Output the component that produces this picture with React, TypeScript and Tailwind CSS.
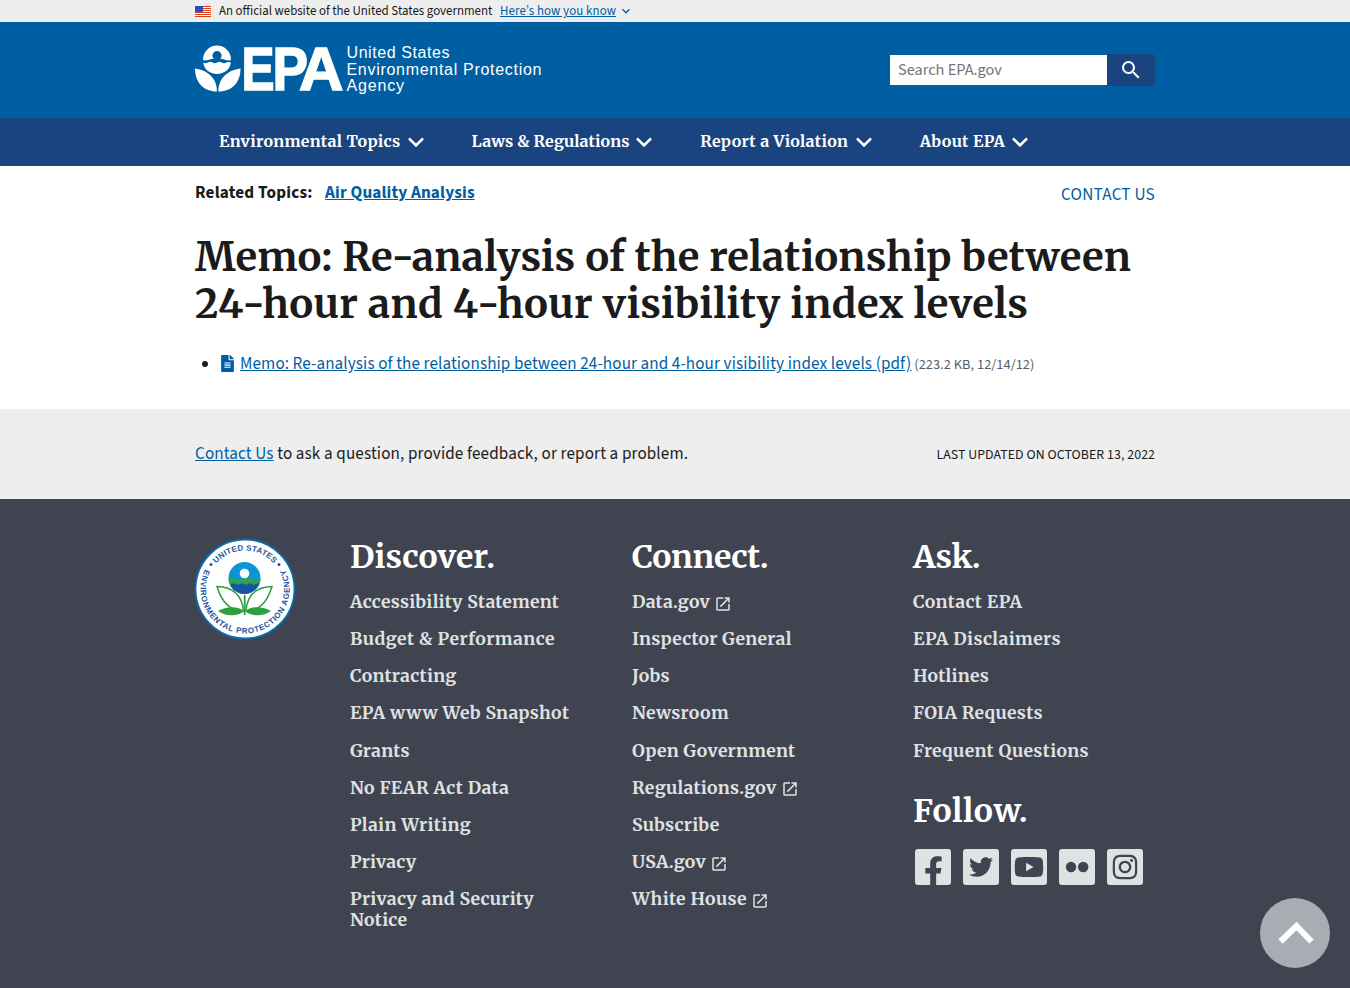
import React from "react";
import { MdExpandMore, MdOpenInNew, MdSearch } from "react-icons/md";
import { FaFacebookF, FaFileAlt, FaInstagram, FaTwitter, FaYoutube } from "react-icons/fa";

type Item = { label: string; external?: boolean; tracking?: string };

const navItems: Item[] = [
  { label: "Environmental Topics", tracking: "w-[181px] tracking-[0.3px]" },
  { label: "Laws & Regulations", tracking: "w-[157px] tracking-[0.1px]" },
  { label: "Report a Violation", tracking: "w-[148px] tracking-[0.31px]" },
  { label: "About EPA", tracking: "w-[85px] tracking-[0.3px]" },
];

const discover: Item[] = [
  { label: "Accessibility Statement" },
  { label: "Budget & Performance", tracking: "tracking-[0.46px]" },
  { label: "Contracting" },
  { label: "EPA www Web Snapshot", tracking: "tracking-[0.35px]" },
  { label: "Grants" },
  { label: "No FEAR Act Data", tracking: "tracking-[0.36px]" },
  { label: "Plain Writing", tracking: "tracking-[0.37px]" },
  { label: "Privacy", tracking: "tracking-[0.15px]" },
  { label: "Privacy and Security Notice" },
];

const connect: Item[] = [
  { label: "Data.gov", external: true },
  { label: "Inspector General" },
  { label: "Jobs" },
  { label: "Newsroom", tracking: "tracking-[0.33px]" },
  { label: "Open Government" },
  { label: "Regulations.gov", external: true },
  { label: "Subscribe" },
  { label: "USA.gov", external: true },
  { label: "White House", external: true, tracking: "tracking-[0.39px]" },
];

const ask: Item[] = [
  { label: "Contact EPA", tracking: "tracking-[0.36px]" },
  { label: "EPA Disclaimers", tracking: "tracking-[0.42px]" },
  { label: "Hotlines" },
  { label: "FOIA Requests", tracking: "tracking-[0.3px]" },
  { label: "Frequent Questions", tracking: "tracking-[0.33px]" },
];

const Flag = () => (
  <svg width="16" height="11" viewBox="0 0 16 11" className="shrink-0">
    <rect width="16" height="11" fill="#fff" />
    {[0, 2, 4, 6, 8, 10].map((y) => (
      <rect key={y} y={y} width="16" height="1" fill="#db3e1f" />
    ))}
    <rect width="8" height="6" fill="#1e33b1" />
    {[1, 3, 5].map((y) =>
      [1, 3, 5, 7].map((x) => <circle key={`${x}-${y}`} cx={x} cy={y} r="0.4" fill="#fff" />),
    )}
  </svg>
);

const Logo = () => (
  <svg width="350" height="54" viewBox="0 0 350 54" fill="#fff" className="block overflow-visible" fontFamily="Liberation Sans, sans-serif">
    <path d="M8 15.6 A14 14 0 0 1 36 15.6 L35 16.4 Q31 16.6 27.5 15 L25.2 15 A4.6 4.6 0 1 0 18.8 15 L16.5 15 Q12.5 16.6 9 16.4 Z" />
    <path d="M8.3 18.6 q2.3 1.5 4.6 0 q2.3 -1.5 4.6 0 q2.3 1.5 4.6 0 q2.3 -1.5 4.6 0 q2.3 1.5 4.6 0 q2.2 -1 4.5 0 C35 25.5 29.5 30 22 30 S9 25.5 8.3 18.6 Z" />
    <path d="M0 24.5 C0 38 8 47.5 21.800 47.5 C22.5 36 13.5 26 0 24.5 Z" />
    <path d="M45.5 24.5 C45.5 38 37.5 47.5 23.400 47.5 C23 36 31.5 26 45.5 24.5 Z" />
    <g fontWeight="700" fontSize="61.5" stroke="#fff" strokeWidth="1.6">
      <text x="46.5" y="45.5" textLength="33" lengthAdjust="spacingAndGlyphs">E</text>
      <text x="77.5" y="45.5" textLength="35.500" lengthAdjust="spacingAndGlyphs">P</text>
      <text x="104" y="45.5">A</text>
    </g>
    <g fontSize="16">
      <text x="151.5" y="14" textLength="103">United States</text>
      <text x="151.5" y="30.5" textLength="195">Environmental Protection</text>
      <text x="151.5" y="47.3" textLength="57.5">Agency</text>
    </g>
  </svg>
);

const Seal = () => (
  <svg width="102" height="102" viewBox="0 0 102 102" className="-ml-px block" fontFamily="Liberation Sans, sans-serif">
    <defs>
      <path id="arcTop" d="M12.5 51 A38.5 38.5 0 0 1 89.5 51" />
      <path id="arcFull" d="M19.5 19.5 A44.5 44.5 0 1 0 82.5 19.5" />
      <clipPath id="globe"><circle cx="50.5" cy="40" r="16" /></clipPath>
    </defs>
    <circle cx="51" cy="51" r="49.5" fill="#fff" stroke="#0a6bb0" strokeWidth="1.8" />
    <g fill="#17569b" fontWeight="700" fontSize="8">
      <text><textPath href="#arcTop" startOffset="50%" textAnchor="middle" textLength="65">UNITED STATES</textPath></text>
      <text><textPath href="#arcFull" startOffset="50%" textAnchor="middle" textLength="180">ENVIRONMENTAL PROTECTION AGENCY</textPath></text>
    </g>
    <circle cx="17" cy="26.5" r="1.5" fill="#17569b" />
    <circle cx="85" cy="26.5" r="1.5" fill="#17569b" />
    <g clipPath="url(#globe)">
      <rect x="34" y="24" width="34" height="34" fill="#0c95d4" />
      <path d="M34 40.5 q4 -1 8 .5 t8 -.5 t8 .5 t9 -.5 V48 H34 Z" fill="#2fa34a" />
      <path d="M34 46 q2 1.500 4 0 t4 0 t4 0 t4 0 t4 0 t4 0 t4 0 t5 0 V60 H34 Z" fill="#1553a5" />
    </g>
    <circle cx="50.5" cy="35.5" r="4.8" fill="#fff" />
    <path d="M49.800 57 h1.800 v20 h-1.800 Z" fill="#2d9f3f" />
    <g fill="#fff" stroke="#2d9f3f" strokeWidth="1.5">
      <path d="M49.5 73 C35 73 27 62 23 48.5 C39 49 48 57 49.5 73 Z" />
      <path d="M52 73 C66 73 74 62 78 48.5 C62 49 53 57 52 73 Z" />
    </g>
    <path d="M50 73.5 C44 67 31 69 24 73 C31 78.5 44 78.5 50 73.5 Z M51.5 73.5 C57 67 70 69 77 73 C70 78.5 57 78.5 51.5 73.5 Z" fill="#2d9f3f" />
  </svg>
);

const FooterList = ({ items }: { items: Item[] }) => (
  <ul className="mt-[15.100px] flex flex-col gap-[16.120px] text-[17.600px] leading-[21px] text-[#dfe1e2]">
    {items.map(({ label, external, tracking }) => (
      <li key={label} className={`flex items-center ${tracking ?? "tracking-[0.27px]"}`}>
        <span>{label}</span>
        {external && <MdOpenInNew className="mt-[2.500px] ml-1 size-[18px] shrink-0" />}
      </li>
    ))}
  </ul>
);

const Tile = ({ children }: { children: React.ReactNode }) => (
  <a className="relative flex size-9 items-center justify-center overflow-hidden rounded-[3px] bg-[#dfe1e2] text-[#3f4450]">
    {children}
  </a>
);

const serif = "font-['Merriweather','DejaVu_Serif_Condensed','DejaVu_Serif',serif] font-bold";
const heading = "text-[32px] leading-[40px] text-white";

export default function App() {
  return (
    <div className="relative h-[988px] overflow-hidden bg-white font-['Source_Sans_3','Noto_Sans_CJK_SC',sans-serif] text-[#1b1b1b]">
      <div className="h-[22px] bg-[#eeeeee]">
        <div className="mx-auto flex h-[22px] w-[960px] items-center text-[12.880px] leading-[22px] whitespace-nowrap">
          <Flag />
          <span className="ml-2 w-[273px]">An official website of the United States government</span>
          <a className="ml-2 w-[116px] tracking-[0.110px] text-[#005ea2] underline">Here’s how you know</a>
          <MdExpandMore className="ml-0.5 size-4 text-[#005ea2]" />
        </div>
      </div>

      <header className="h-24 bg-[#005ea2]">
        <div className="mx-auto flex h-24 w-[960px] items-start justify-between">
          <div className="pt-[22px]"><Logo /></div>
          <form className="mt-8 flex w-[265px]">
            <div className="my-px flex h-[30px] w-[217px] items-center bg-white pl-2 text-[16.250px] leading-[30px] text-[#757575]">
              Search EPA.gov
            </div>
            <button type="button" className="flex h-8 w-12 items-center justify-center rounded-r bg-[#1a4480] text-white">
              <MdSearch className="size-6" />
            </button>
          </form>
        </div>
      </header>

      <nav className="h-12 bg-[#1a4480]">
        <div className={`mx-auto flex h-[47px] w-[960px] items-center pl-6 text-[16px] text-white ${serif}`}>
          {navItems.map(({ label, tracking }) => (
            <a key={label} className="mr-12 flex items-center">
              <span className={`pb-px leading-[20px] whitespace-nowrap ${tracking}`}>{label}</span>
              <MdExpandMore className="-mr-[7.900px] -ml-[0.500px] size-8" />
            </a>
          ))}
        </div>
      </nav>

      <main className="mx-auto h-[243px] w-[960px] pt-4">
        <div className="flex h-6 justify-between text-[17.200px] leading-[21px]">
          <p className="flex font-bold">
            <span className="w-[130px] tracking-[0.210px]">Related Topics:</span>
            <a className="tracking-[0.150px] text-[#005ea2] underline">Air Quality Analysis</a>
          </p>
          <a className="pt-0.5 tracking-[0.220px] text-[#005ea2]">CONTACT US</a>
        </div>
        <h1 className={`mt-[28px] text-[40px] leading-[47px] whitespace-nowrap ${serif}`}>
          <span className="block tracking-[0.180px]">Memo: Re-analysis of the relationship between</span>
          <span className="block tracking-[0.310px]">24-hour and 4-hour visibility index levels</span>
        </h1>
        <ul className="mt-6">
          <li className="flex h-6 items-center pl-[7px] whitespace-nowrap">
            <span className="size-[6px] rounded-full bg-[#1b1b1b]" />
            <FaFileAlt className="mb-px ml-[13px] h-[17px] w-[13px] text-[#005ea2]" />
            <p className="mt-[1.500px] ml-1.5 text-[17.100px] leading-6">
              <a className="tracking-[0.100px] text-[#005ea2] underline">
                Memo: Re-analysis of the relationship between 24-hour and 4-hour visibility index levels (pdf)
              </a>
              <span className="ml-[3px] text-[14.400px] text-[#565c65]">(223.2 KB, 12/14/12)</span>
            </p>
          </li>
        </ul>
      </main>

      <section className="h-[90px] bg-[#eeeeee]">
        <div className="mx-auto flex h-[90px] w-[960px] items-center justify-between text-[17.100px] leading-6">
          <p className="tracking-[0.130px]">
            <a className="text-[#005ea2] underline">Contact Us</a> to ask a question, provide feedback, or report a problem.
          </p>
          <p className="pt-0.5 text-[13.800px] tracking-[0.070px]">LAST UPDATED ON OCTOBER 13, 2022</p>
        </div>
      </section>

      <footer className="h-[489px] bg-[#3f4450]">
        <div className="mx-auto flex w-[960px] pt-[38px]">
          <div className="w-[155px] pt-px"><Seal /></div>
          <div className={`flex flex-1 ${serif}`}>
            <div className="w-[282px] pr-14">
              <h2 className={`${heading} tracking-[0.100px]`}>Discover.</h2>
              <FooterList items={discover} />
            </div>
            <div className="w-[281px]">
              <h2 className={`${heading} tracking-[-0.350px]`}>Connect.</h2>
              <FooterList items={connect} />
            </div>
            <div className="flex-1">
              <h2 className={`${heading} tracking-[-0.200px]`}>Ask.</h2>
              <FooterList items={ask} />
              <h2 className={`mt-[29.700px] ${heading} tracking-[0.600px]`}>Follow.</h2>
              <div className="mt-[18px] ml-0.5 flex gap-3">
                <Tile><FaFacebookF className="absolute bottom-[-2px] left-[9px] h-[31px] w-[19px]" /></Tile>
                <Tile><FaTwitter className="size-6" /></Tile>
                <Tile><FaYoutube className="size-[30px]" /></Tile>
                <Tile>
                  <svg width="24" height="12" viewBox="0 0 24 12" fill="currentColor">
                    <circle cx="6" cy="6" r="5.2" />
                    <circle cx="18.2" cy="6" r="5.2" />
                  </svg>
                </Tile>
                <Tile><FaInstagram className="size-[28px]" /></Tile>
              </div>
            </div>
          </div>
        </div>
      </footer>

      <a className="absolute right-5 bottom-5 size-[70px] rounded-full bg-[#a8adb3]">
        <svg width="70" height="70" viewBox="0 0 70 70" fill="none" stroke="#fff" strokeWidth="6">
          <path d="M20.5 43.5 L36.500 28 L51.5 43.5" />
        </svg>
      </a>
    </div>
  );
}
